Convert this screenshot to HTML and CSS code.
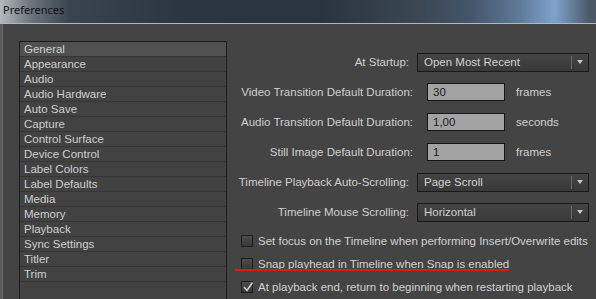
FILE: index.html
```html
<!DOCTYPE html>
<html lang="en">
<head>
    <meta charset="UTF-8">
    <title>Preferences</title>
    <link rel="stylesheet" href="styles.css">
</head>
<body>

<div class="window">
    <div class="titlebar">Preferences</div>

    <div class="content">
        <ul class="nav">
            <li class="active">General</li>
            <li>Appearance</li>
            <li>Audio</li>
            <li>Audio Hardware</li>
            <li>Auto Save</li>
            <li>Capture</li>
            <li>Control Surface</li>
            <li>Device Control</li>
            <li>Label Colors</li>
            <li>Label Defaults</li>
            <li>Media</li>
            <li>Memory</li>
            <li>Playback</li>
            <li>Sync Settings</li>
            <li>Titler</li>
            <li>Trim</li>
        </ul>

        <div class="panel">
            <div class="row">
                <label class="label">At Startup:</label>
                <div class="select">
                    <span>Open Most Recent</span>
                    <span class="arrow"></span>
                </div>
            </div>

            <div class="row">
                <label class="label label-wide">Video Transition Default Duration:</label>
                <input class="field" type="text" value="30">
                <span class="unit">frames</span>
            </div>

            <div class="row">
                <label class="label label-wide">Audio Transition Default Duration:</label>
                <input class="field" type="text" value="1,00">
                <span class="unit">seconds</span>
            </div>

            <div class="row">
                <label class="label label-wide">Still Image Default Duration:</label>
                <input class="field" type="text" value="1">
                <span class="unit">frames</span>
            </div>

            <div class="row">
                <label class="label">Timeline Playback Auto-Scrolling:</label>
                <div class="select">
                    <span>Page Scroll</span>
                    <span class="arrow"></span>
                </div>
            </div>

            <div class="row">
                <label class="label">Timeline Mouse Scrolling:</label>
                <div class="select">
                    <span>Horizontal</span>
                    <span class="arrow"></span>
                </div>
            </div>

            <div class="checks">
                <div class="check-row">
                    <span class="box"></span>
                    <span>Set focus on the Timeline when performing Insert/Overwrite edits</span>
                </div>
                <div class="check-row marked">
                    <span class="box"></span>
                    <span>Snap playhead in Timeline when Snap is enabled</span>
                </div>
                <div class="check-row">
                    <span class="box">
                        <svg width="12" height="12" viewBox="0 0 12 12">
                            <polyline points="2,6 5,9.5 10.5,1.5" fill="none" stroke="#cfcfcf" stroke-width="1.6"/>
                        </svg>
                    </span>
                    <span>At playback end, return to beginning when restarting playback</span>
                </div>
            </div>
        </div>
    </div>
</div>

</body>
</html>
```

FILE: styles.css
```css
body {
    margin: 0;
    font-family: 'Liberation Sans', Arial, sans-serif;
    font-size: 11.5px;
    background: #444;
}

.window {
    width: 596px;
    height: 299px;
    overflow: hidden;
    display: flex;
    flex-direction: column;
}

.titlebar {
    height: 23px;
    flex: none;
    padding-left: 3px;
    font-family: 'Noto Sans', sans-serif;
    font-size: 11px;
    line-height: 20px;
    color: #111;
    background: linear-gradient(90deg, #b4babf 0px, #6d767e 30px, #3a444e 70px, #2c3640 180px, #2a343e 320px, #3b4753 420px, #44566a 470px, #5f7a98 520px, #7fa2cc 555px, #4a5866 590px);
    border-bottom: 1px solid #aeb8c0;
}

.content {
    flex: 1;
    display: flex;
    background: #444;
    border-left: 2px solid #5a5a5a;
    box-shadow: inset 1px 0 0 #6c6c6c;
}

.nav {
    list-style: none;
    margin: 17px 0 0 17px;
    padding: 0;
    width: 206px;
    background: #424242;
    border: 1px solid #1c1c1c;
    border-bottom: none;
}

.nav li {
    height: 14px;
    line-height: 14px;
    padding-left: 4px;
    color: #cfcfcf;
    border-bottom: 1px solid #363636;
}

.nav li.active {
    background: #505050;
}

.panel {
    flex: 1;
    padding-top: 23px;
}

.row {
    height: 30px;
    display: flex;
    align-items: center;
}

.label {
    width: 182px;
    text-align: right;
    color: #cfcfcf;
    white-space: nowrap;
}

.label-wide {
    width: 186px;
}

.select {
    margin-left: 8px;
    width: 164px;
    height: 17px;
    display: flex;
    align-items: center;
    justify-content: space-between;
    padding-left: 6px;
    color: #d2d2d2;
    background: linear-gradient(#444, #393939);
    border: 1px solid #1a1a1a;
}

.arrow {
    width: 16px;
    height: 13px;
    border-left: 1px solid #6a6a6a;
    display: flex;
    align-items: center;
    justify-content: center;
}

.arrow::after {
    content: '';
    border-left: 3.5px solid transparent;
    border-right: 3.5px solid transparent;
    border-top: 4px solid #c8c8c8;
}

.field {
    margin-left: 14px;
    width: 78px;
    height: 18px;
    box-sizing: border-box;
    padding: 0 5px;
    font-family: inherit;
    font-size: 11.5px;
    color: #1a1a1a;
    background: #a3a3a3;
    border: 1px solid #161616;
    outline: none;
}

.unit {
    margin-left: 11px;
    color: #cfcfcf;
}

.checks {
    margin-top: 2px;
}

.check-row {
    position: relative;
    height: 23px;
    display: flex;
    align-items: center;
    padding-left: 14px;
    color: #d2d2d2;
    white-space: nowrap;
}

.box {
    flex: none;
    width: 10px;
    height: 10px;
    margin-right: 5px;
    border: 1px solid #1e1e1e;
    background: linear-gradient(#4c4c4c, #383838);
    position: relative;
}

.box svg {
    position: absolute;
    left: 0;
    top: -1px;
}

.check-row.marked::after {
    content: '';
    position: absolute;
    left: 8px;
    width: 274px;
    top: 17px;
    height: 2px;
    background: #e01818;
}
```
